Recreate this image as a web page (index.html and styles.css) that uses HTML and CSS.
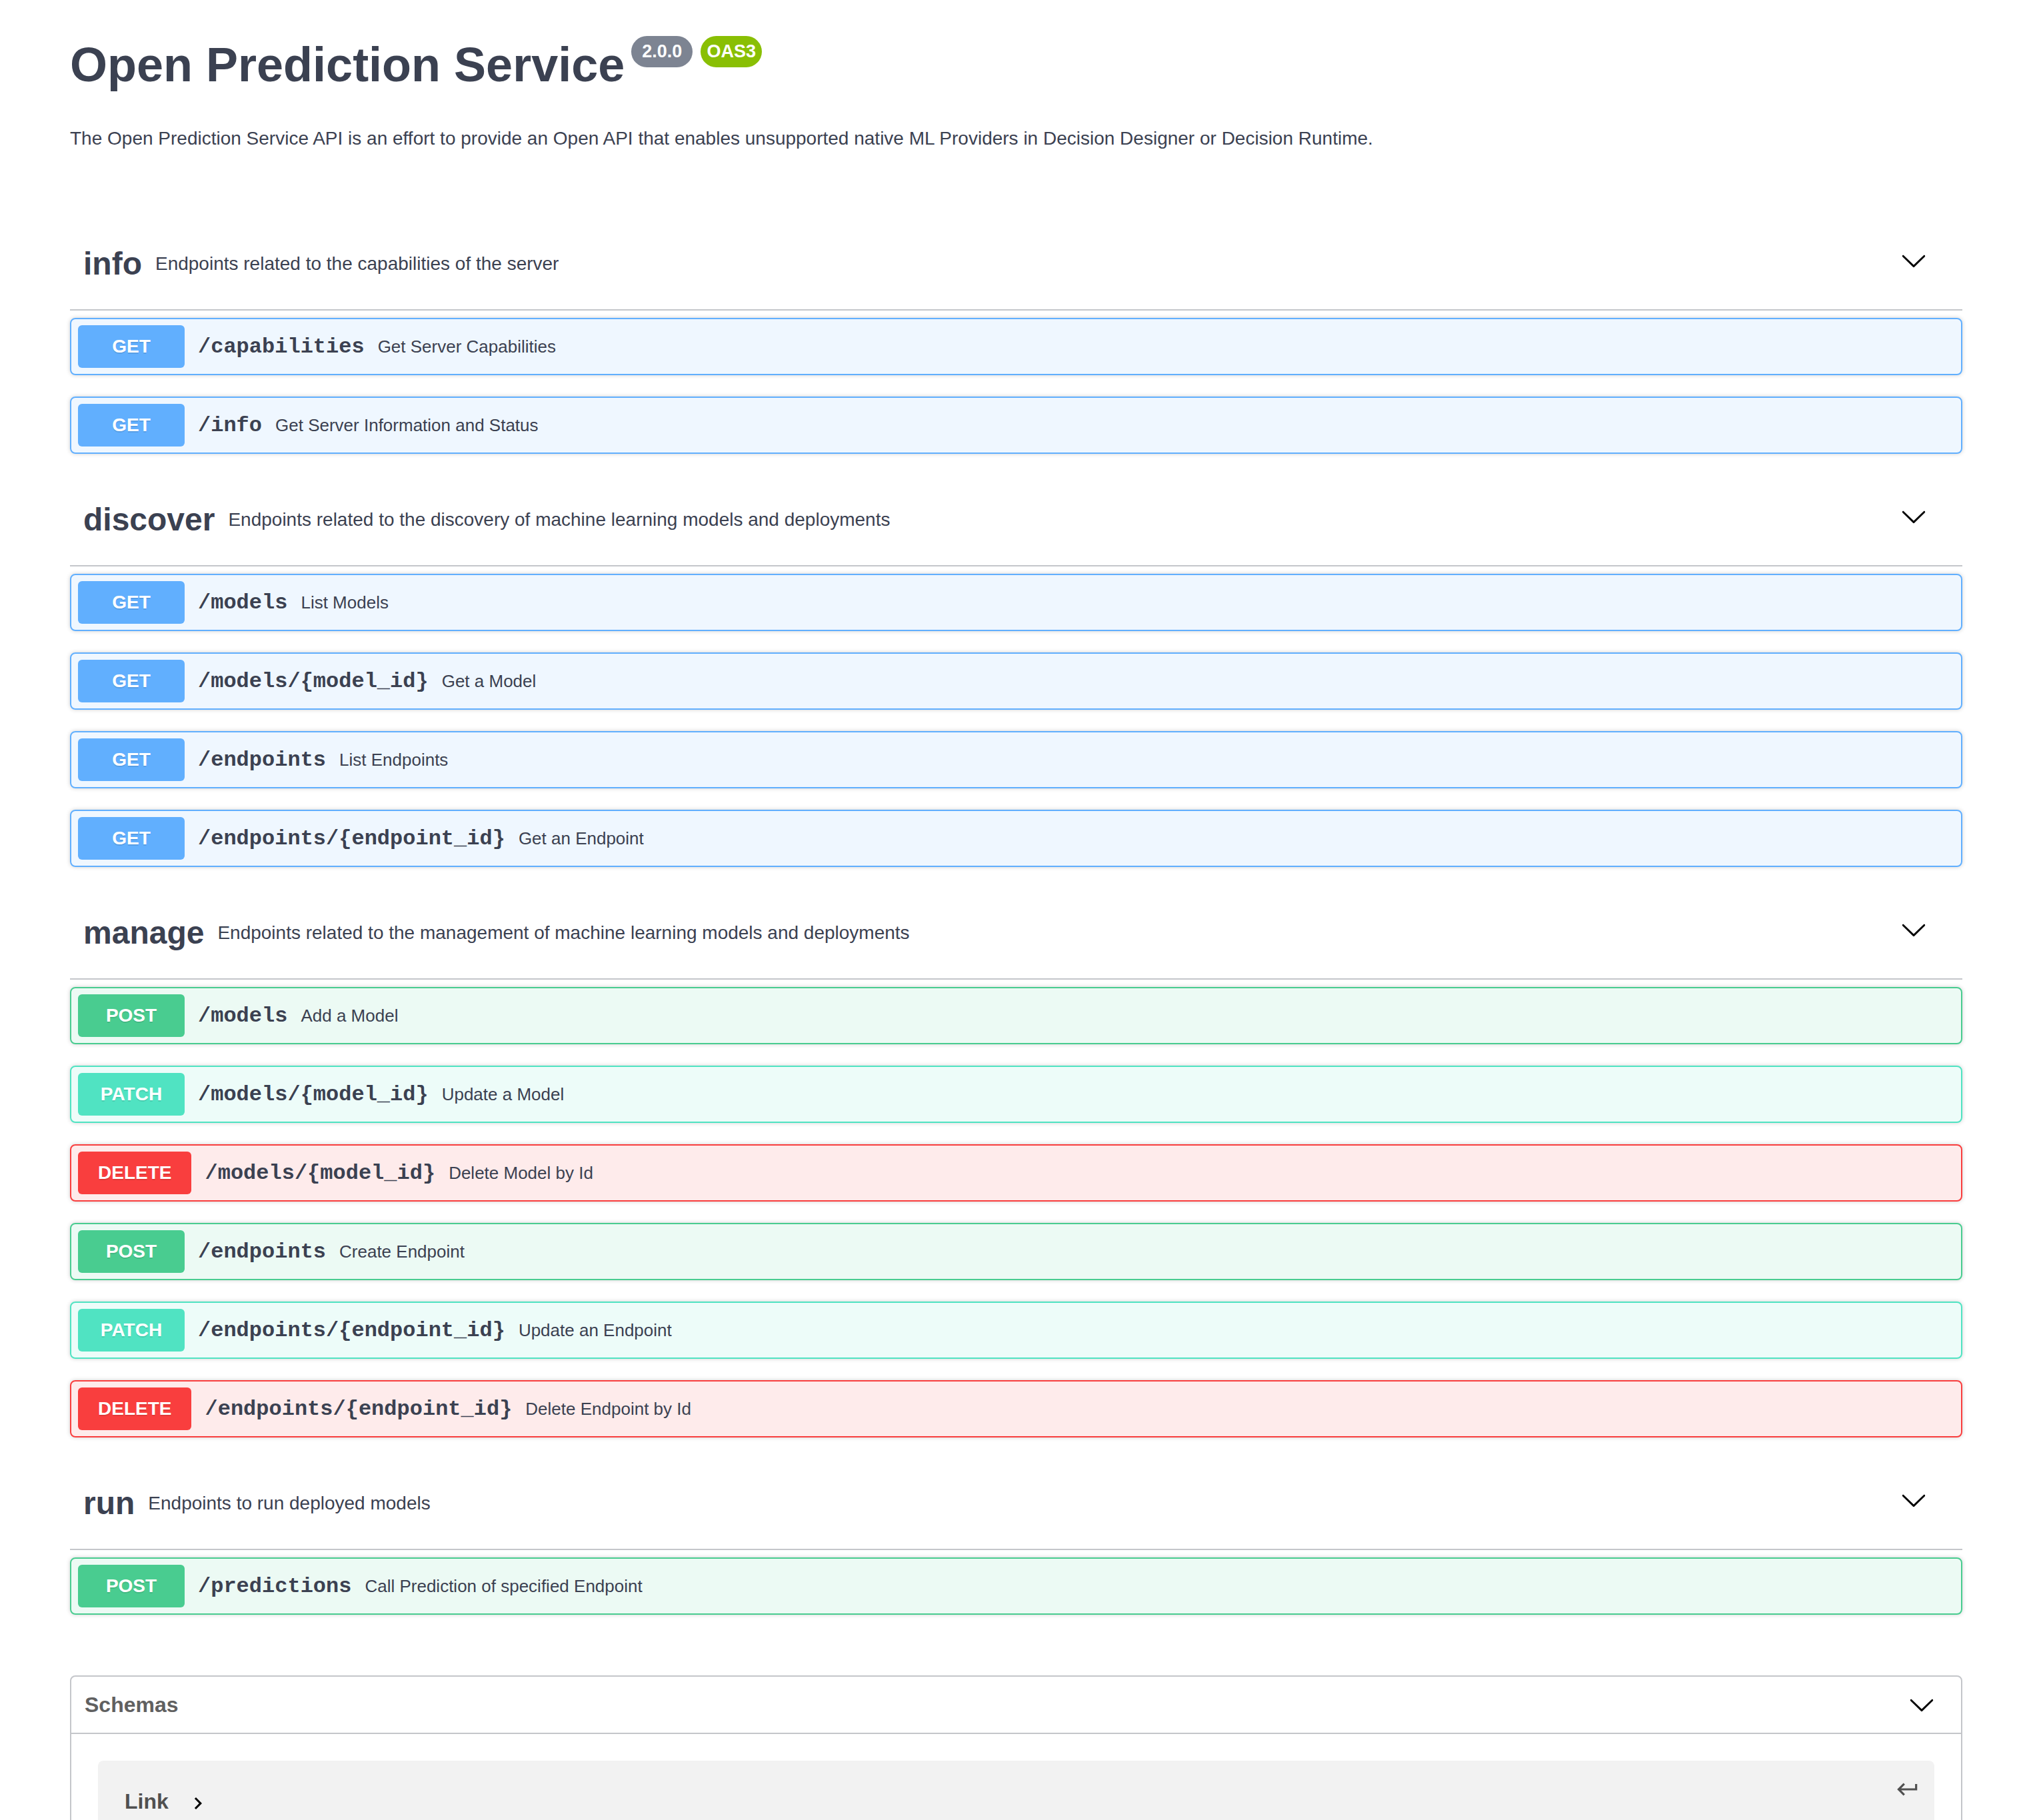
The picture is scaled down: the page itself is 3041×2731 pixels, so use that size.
FILE: index.html
```html
<!DOCTYPE html>
<html lang="en">
<head>
<meta charset="utf-8">
<title>Open Prediction Service</title>
<link rel="stylesheet" href="styles.css">
</head>
<body>
<div class="wrapper">
  <div class="info">
    <div class="title-row">
      <h2 class="title">Open Prediction Service</h2>
      <span class="badge badge-version">2.0.0</span>
      <span class="badge badge-oas">OAS3</span>
    </div>
    <p class="desc">The Open Prediction Service API is an effort to provide an Open API that enables unsupported native ML Providers in Decision Designer or Decision Runtime.</p>
  </div>

  <section class="tag-section first">
    <h3 class="tag">
      <span class="tag-name">info</span>
      <span class="tag-desc">Endpoints related to the capabilities of the server</span>
      <svg class="arrow" width="40" height="40" viewBox="0 0 20 20"><path d="M17.418 6.109c.272-.268.709-.268.979 0s.271.701 0 .969l-7.908 7.83c-.27.268-.707.268-.979 0l-7.908-7.83c-.27-.268-.27-.701 0-.969.271-.268.709-.268.979 0L10 13.25l7.418-7.141z"/></svg>
    </h3>
    <div class="ops">
      <div class="opblock get"><span class="method">GET</span><span class="path">/capabilities</span><span class="summary">Get Server Capabilities</span></div>
      <div class="opblock get"><span class="method">GET</span><span class="path">/info</span><span class="summary">Get Server Information and Status</span></div>
    </div>
  </section>

  <section class="tag-section">
    <h3 class="tag">
      <span class="tag-name">discover</span>
      <span class="tag-desc">Endpoints related to the discovery of machine learning models and deployments</span>
      <svg class="arrow" width="40" height="40" viewBox="0 0 20 20"><path d="M17.418 6.109c.272-.268.709-.268.979 0s.271.701 0 .969l-7.908 7.83c-.27.268-.707.268-.979 0l-7.908-7.83c-.27-.268-.27-.701 0-.969.271-.268.709-.268.979 0L10 13.25l7.418-7.141z"/></svg>
    </h3>
    <div class="ops">
      <div class="opblock get"><span class="method">GET</span><span class="path">/models</span><span class="summary">List Models</span></div>
      <div class="opblock get"><span class="method">GET</span><span class="path">/models/{model_id}</span><span class="summary">Get a Model</span></div>
      <div class="opblock get"><span class="method">GET</span><span class="path">/endpoints</span><span class="summary">List Endpoints</span></div>
      <div class="opblock get"><span class="method">GET</span><span class="path">/endpoints/{endpoint_id}</span><span class="summary">Get an Endpoint</span></div>
    </div>
  </section>

  <section class="tag-section">
    <h3 class="tag">
      <span class="tag-name">manage</span>
      <span class="tag-desc">Endpoints related to the management of machine learning models and deployments</span>
      <svg class="arrow" width="40" height="40" viewBox="0 0 20 20"><path d="M17.418 6.109c.272-.268.709-.268.979 0s.271.701 0 .969l-7.908 7.83c-.27.268-.707.268-.979 0l-7.908-7.83c-.27-.268-.27-.701 0-.969.271-.268.709-.268.979 0L10 13.25l7.418-7.141z"/></svg>
    </h3>
    <div class="ops">
      <div class="opblock post"><span class="method">POST</span><span class="path">/models</span><span class="summary">Add a Model</span></div>
      <div class="opblock patch"><span class="method">PATCH</span><span class="path">/models/{model_id}</span><span class="summary">Update a Model</span></div>
      <div class="opblock delete"><span class="method">DELETE</span><span class="path">/models/{model_id}</span><span class="summary">Delete Model by Id</span></div>
      <div class="opblock post"><span class="method">POST</span><span class="path">/endpoints</span><span class="summary">Create Endpoint</span></div>
      <div class="opblock patch"><span class="method">PATCH</span><span class="path">/endpoints/{endpoint_id}</span><span class="summary">Update an Endpoint</span></div>
      <div class="opblock delete"><span class="method">DELETE</span><span class="path">/endpoints/{endpoint_id}</span><span class="summary">Delete Endpoint by Id</span></div>
    </div>
  </section>

  <section class="tag-section">
    <h3 class="tag">
      <span class="tag-name">run</span>
      <span class="tag-desc">Endpoints to run deployed models</span>
      <svg class="arrow" width="40" height="40" viewBox="0 0 20 20"><path d="M17.418 6.109c.272-.268.709-.268.979 0s.271.701 0 .969l-7.908 7.83c-.27.268-.707.268-.979 0l-7.908-7.83c-.27-.268-.27-.701 0-.969.271-.268.709-.268.979 0L10 13.25l7.418-7.141z"/></svg>
    </h3>
    <div class="ops">
      <div class="opblock post"><span class="method">POST</span><span class="path">/predictions</span><span class="summary">Call Prediction of specified Endpoint</span></div>
    </div>
  </section>

  <section class="models">
    <h4 class="models-head">
      <span>Schemas</span>
      <svg class="arrow" width="40" height="40" viewBox="0 0 20 20"><path d="M17.418 6.109c.272-.268.709-.268.979 0s.271.701 0 .969l-7.908 7.83c-.27.268-.707.268-.979 0l-7.908-7.83c-.27-.268-.27-.701 0-.969.271-.268.709-.268.979 0L10 13.25l7.418-7.141z"/></svg>
    </h4>
    <div class="model-container">
      <div class="model-row">
        <span class="model-title">Link</span>
        <svg class="model-toggle" width="36" height="36" viewBox="0 0 24 24"><path d="M10 6L8.59 7.41 13.17 12l-4.58 4.59L10 18l6-6z"/></svg>
      </div>
      <svg class="jump-to" width="38" height="38" viewBox="0 0 24 24"><path d="M19 7v4H5.83l3.58-3.59L8 6l-6 6 6 6 1.41-1.41L5.83 13H21V7z"/></svg>
    </div>
  </section>
</div>
</body>
</html>
```

FILE: styles.css
```css
html, body {
  margin: 0;
  padding: 0;
  background: #ffffff;
}

body {
  font-family: "Liberation Sans", Arial, Helvetica, sans-serif;
  color: #3b4151;
}

.wrapper {
  width: 2839px;
  margin: 0 0 0 105px;
  padding-bottom: 200px;
}

.info {
  padding-top: 52px;
}

.title-row {
  display: flex;
  align-items: flex-start;
}

.title {
  margin: 4px 0 0;
  font-size: 72px;
  line-height: 83px;
  font-weight: 700;
  color: #3b4151;
}

.badge {
  box-sizing: border-box;
  min-width: 92px;
  height: 47px;
  line-height: 47px;
  padding: 0 8px;
  margin-top: 2px;
  margin-left: 10px;
  border-radius: 114px;
  font-size: 27px;
  font-weight: 700;
  color: #ffffff;
  text-align: center;
}

.badge-version {
  background: #7d8492;
}

.badge-oas {
  background: #89bf04;
  margin-left: 12px;
}

.desc {
  margin: 53px 0 0;
  font-size: 28px;
  line-height: 32px;
  color: #3b4151;
}

.tag-section {
  display: flex;
  flex-direction: column;
}

.tag-section.first {
  margin-top: 94px;
}

.tag {
  display: flex;
  align-items: center;
  height: 106px;
  margin: 0;
  padding: 20px 53px 20px 20px;
  border-bottom: 2px solid rgba(59, 65, 81, 0.3);
  color: #3b4151;
}

.tag-name {
  margin-top: 9px;
  font-size: 48px;
  font-weight: 700;
}

.tag-desc {
  flex: 1;
  margin-top: 10px;
  padding: 0 20px;
  font-size: 28px;
  font-weight: 400;
}

.arrow {
  flex: none;
  fill: #000000;
}

.ops {
  display: flex;
  flex-direction: column;
  gap: 32px;
  margin: 11px 0 21px;
}

.opblock {
  display: flex;
  align-items: center;
  padding: 9px 10px;
  border: 2px solid #000;
  border-radius: 8px;
  box-shadow: 0 0 6px rgba(0, 0, 0, 0.19);
}

.opblock.get {
  border-color: #61affe;
  background: rgba(97, 175, 254, 0.1);
}

.opblock.post {
  border-color: #49cc90;
  background: rgba(73, 204, 144, 0.1);
}

.opblock.patch {
  border-color: #50e3c2;
  background: rgba(80, 227, 194, 0.1);
}

.opblock.delete {
  border-color: #f93e3e;
  background: rgba(249, 62, 62, 0.1);
}

.method {
  box-sizing: border-box;
  min-width: 160px;
  height: 64px;
  line-height: 64px;
  padding: 0 30px;
  border-radius: 6px;
  font-size: 28px;
  font-weight: 700;
  color: #ffffff;
  text-align: center;
  text-shadow: 0 2px 0 rgba(0, 0, 0, 0.1);
}

.get .method { background: #61affe; }
.post .method { background: #49cc90; }
.patch .method { background: #50e3c2; }
.delete .method { background: #f93e3e; }

.path {
  padding: 0 20px;
  font-family: "Liberation Mono", "Courier New", monospace;
  font-weight: 700;
  font-size: 32px;
  color: #3b4151;
}

.summary {
  flex: 1 1 auto;
  font-size: 26px;
  color: #3b4151;
}

.models {
  margin-top: 70px;
  border: 2px solid rgba(59, 65, 81, 0.3);
  border-radius: 8px;
}

.models-head {
  display: flex;
  align-items: center;
  justify-content: space-between;
  height: 84px;
  margin: 0;
  padding: 0 39px 0 20px;
  border-bottom: 2px solid rgba(59, 65, 81, 0.3);
  font-size: 32px;
  line-height: 36px;
  font-weight: 700;
  color: #606060;
}

.model-container {
  position: relative;
  margin: 40px 40px 30px;
  padding: 40px 40px;
  background: rgba(0, 0, 0, 0.05);
  border-radius: 8px;
}

.model-row {
  display: flex;
  align-items: center;
}

.model-title {
  font-size: 32px;
  line-height: 36px;
  font-weight: 700;
  color: #505050;
}

.model-toggle {
  margin-left: 26px;
  margin-top: 6px;
  fill: #000000;
}

.jump-to {
  position: absolute;
  top: 24px;
  right: 21px;
  fill: #505050;
}
```
